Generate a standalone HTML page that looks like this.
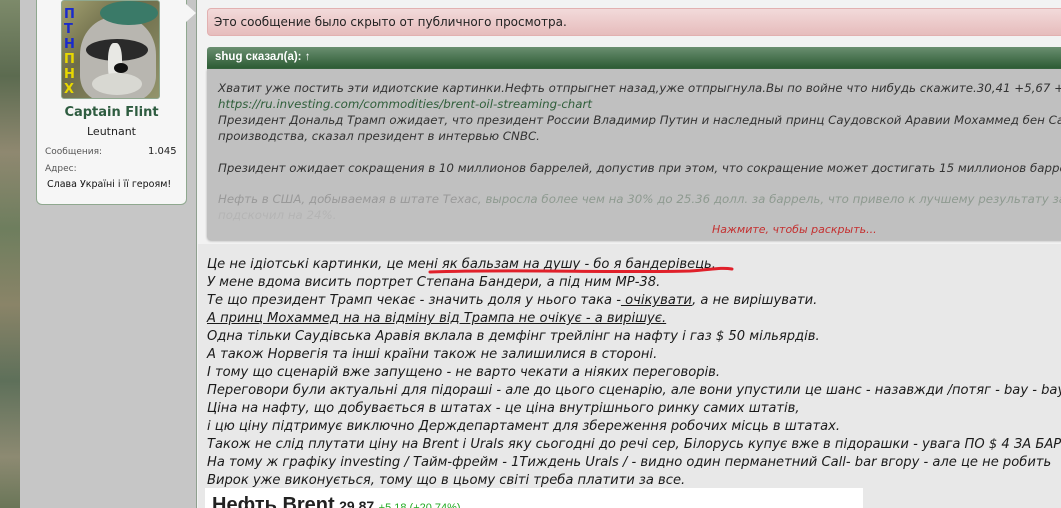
<!DOCTYPE html>
<html style="overflow:hidden"><head><meta charset="utf-8"><style>
*{margin:0;padding:0;box-sizing:border-box}
html,body{overflow:hidden}
body{width:1061px;height:508px;position:relative;background:#f2f2f2;font-family:"DejaVu Sans","Liberation Sans",sans-serif}
.camo{position:absolute;left:0;top:0;width:20px;height:508px;background:linear-gradient(180deg,#7d8a6a 0%,#5c6b50 15%,#8f8870 30%,#6e7e5e 45%,#8a8468 60%,#5e705a 75%,#8d8a72 90%,#6a7658 100%)}
.side{position:absolute;left:20px;top:0;width:177px;height:508px;background:#c6c6c6;border-right:1px solid #8fa08f}
.card{position:absolute;left:36px;top:-6px;width:151px;height:211px;background:#f6f6f6;border:1px solid #8fa88f;border-radius:6px}
.arrow{position:absolute;left:186px;top:4px;width:0;height:0;border-top:9px solid transparent;border-bottom:9px solid transparent;border-left:10px solid #f6f6f6}
.av{position:absolute;left:61px;top:0;width:99px;height:99px;border:1px solid #8fa88f;border-radius:3px;overflow:hidden;background:linear-gradient(135deg,#a2a070,#6d6c4a 40%,#93946c)}
.main{position:absolute;left:198px;top:0;width:863px;height:508px;background:#f2f2f2;overflow:hidden}
.lower{position:absolute;left:198px;top:244px;width:863px;height:264px;background:#e8e8e8}
.t{position:absolute;white-space:nowrap;font-style:italic}
.clip{position:absolute;left:0;top:0;width:1061px;height:508px;overflow:hidden}
</style></head><body>
<div class="clip">
<div class="camo"></div>
<div class="side"></div>
<div class="card"></div>
<div class="arrow"></div>
<div class="av">
 <div style="position:absolute;left:18px;top:16px;width:76px;height:84px;border-radius:45% 45% 30% 30%;background:#b8b6b0"></div>
 <div style="position:absolute;left:38px;top:0;width:58px;height:24px;border-radius:50%;background:#3a7a68"></div>
 <div style="position:absolute;left:24px;top:38px;width:62px;height:22px;border-radius:50%;background:#2a2a2a"></div>
 <div style="position:absolute;left:46px;top:42px;width:14px;height:40px;border-radius:40%;background:#e8e8e4"></div>
 <div style="position:absolute;left:30px;top:72px;width:50px;height:22px;border-radius:50%;background:#d8d8d2"></div>
 <div style="position:absolute;left:52px;top:62px;width:14px;height:10px;border-radius:50%;background:#111"></div>
 <div style="position:absolute;left:2px;top:6px;width:14px;font:bold 13px/15px 'DejaVu Sans';color:#1a2acc">П<br>Т<br>Н</div>
 <div style="position:absolute;left:2px;top:51px;width:14px;font:bold 13px/15px 'DejaVu Sans';color:#e8d800">П<br>Н<br>Х</div>
</div>
<div style="position:absolute;left:36px;top:105px;width:151px;text-align:center;font:bold 13px 'DejaVu Sans';color:#2e5c40">Captain Flint</div>
<div style="position:absolute;left:36px;top:125px;width:151px;text-align:center;font:11px 'DejaVu Sans';color:#222">Leutnant</div>
<div style="position:absolute;left:45px;top:147px;font:9px 'DejaVu Sans';color:#555">Сообщения:</div>
<div style="position:absolute;left:148px;top:146px;font:10px 'DejaVu Sans';color:#222">1.045</div>
<div style="position:absolute;left:45px;top:164px;font:9px 'DejaVu Sans';color:#555">Адрес:</div>
<div style="position:absolute;left:47px;top:179px;font:9.5px 'DejaVu Sans';color:#111">Слава Україні і її героям!</div>

<div class="main"></div>
<div class="lower"></div>
<div style="position:absolute;left:207px;top:8px;width:860px;height:28px;background:linear-gradient(#f2dada,#e6bcbc);border:1px solid #e2b0b0;border-radius:4px"></div>
<div style="position:absolute;left:214px;top:15px;font:12px 'DejaVu Sans';color:#222">Это сообщение было скрыто от публичного просмотра.</div>

<div style="position:absolute;left:207px;top:47px;width:860px;height:22px;background:linear-gradient(#6a8e70,#2a5a32);border-radius:3px 3px 0 0"></div>
<div style="position:absolute;left:215px;top:51px;font:bold 11.5px 'Liberation Sans',sans-serif;color:#fff">shug сказал(а): ↑</div>
<div style="position:absolute;left:207px;top:69px;width:860px;height:171px;background:#c0c0c0;border-radius:0 0 4px 4px;box-shadow:0 1px 2px #aaa"></div>
<div style="font-size:11.8px;line-height:16px;color:#333">
<div class="t" style="left:218px;top:80px">Хватит уже постить эти идиотские картинки.Нефть отпрыгнет назад,уже отпрыгнула.Вы по войне что нибудь скажите.30,41 +5,67 +22,92%</div>
<div class="t" style="left:218px;top:96px;color:#2f5e3a">https://ru.investing.com/commodities/brent-oil-streaming-chart</div>
<div class="t" style="left:218px;top:112px">Президент Дональд Трамп ожидает, что президент России Владимир Путин и наследный принц Саудовской Аравии Мохаммед бен Салман</div>
<div class="t" style="left:218px;top:128px">производства, сказал президент в интервью CNBC.</div>
<div class="t" style="left:218px;top:160px">Президент ожидает сокращения в 10 миллионов баррелей, допустив при этом, что сокращение может достигать 15 миллионов баррелей</div>
<div class="t" style="left:218px;top:191px;color:#999">Нефть в США, добываемая в штате Техас, <span style="color:#8e9a90">выросла более чем на 30% до 25.36 долл. за баррель, что привело к лучшему результату за</span></div>
<div class="t" style="left:218px;top:207px;color:#b4b4b4">подскочил на 24%.</div>
</div>
<div class="t" style="left:712px;top:223px;font-size:11px;color:#c43030">Нажмите, чтобы раскрыть...</div>

<div style="font-size:13.1px;line-height:18px;color:#1a1a1a">
<div class="t" style="left:207px;top:256px">Це не ідіотські картинки, це мені як бальзам на душу - бо я бандерівець.</div>
<div class="t" style="left:207px;top:274px">У мене вдома висить портрет Степана Бандери, а під ним МР-38.</div>
<div class="t" style="left:207px;top:292px">Те що президент Трамп чекає - значить доля у нього така -<u> очікувати</u>, а не вирішувати.</div>
<div class="t" style="left:207px;top:310px"><u>А принц Мохаммед на на відміну від Трампа не очікує - а вирішує.</u></div>
<div class="t" style="left:207px;top:328px">Одна тільки Саудівська Аравія вклала в демфінг трейлінг на нафту і газ $ 50 мільярдів.</div>
<div class="t" style="left:207px;top:346px">А також Норвегія та інші країни також не залишилися в стороні.</div>
<div class="t" style="left:207px;top:364px">І тому що сценарій вже запущено - не варто чекати а ніяких переговорів.</div>
<div class="t" style="left:207px;top:382px">Переговори були актуальні для підораші - але до цього сценарію, але вони упустили це шанс - назавжди /потяг - bay - bay</div>
<div class="t" style="left:207px;top:400px">Ціна на нафту, що добувається в штатах - це ціна внутрішнього ринку самих штатів,</div>
<div class="t" style="left:207px;top:418px">і цю ціну підтримує виключно Держдепартамент для збереження робочих місць в штатах.</div>
<div class="t" style="left:207px;top:436px">Також не слід плутати ціну на Brent і Urals яку сьогодні до речі сер, Білорусь купує вже в підорашки - увага ПО $ 4 ЗА БАРЕЛЬ</div>
<div class="t" style="left:207px;top:454px">На тому ж графіку investing / Тайм-фрейм - 1Тиждень Urals / - видно один перманетний Call- bar вгору - але це не робить</div>
<div class="t" style="left:207px;top:472px">Вирок уже виконується, тому що в цьому світі треба платити за все.</div>
</div>
<svg style="position:absolute;left:0;top:0" width="1061" height="508"><path d="M430 272 C520 269 610 273 690 271 C710 270 720 267 732 269" stroke="#e0202a" stroke-width="3" fill="none" stroke-linecap="round"/></svg>
<div style="position:absolute;left:205px;top:488px;width:658px;height:20px;background:#fff"></div>
<div style="position:absolute;left:212px;top:494px;white-space:nowrap;font-family:'Liberation Sans',sans-serif;color:#222"><b style="font-size:20px">Нефть Brent</b> <b style="font-size:14px">29.87</b> <span style="font-size:11px;color:#2a2">+5.18 (+20.74%)</span></div>
</div>
</body></html>
